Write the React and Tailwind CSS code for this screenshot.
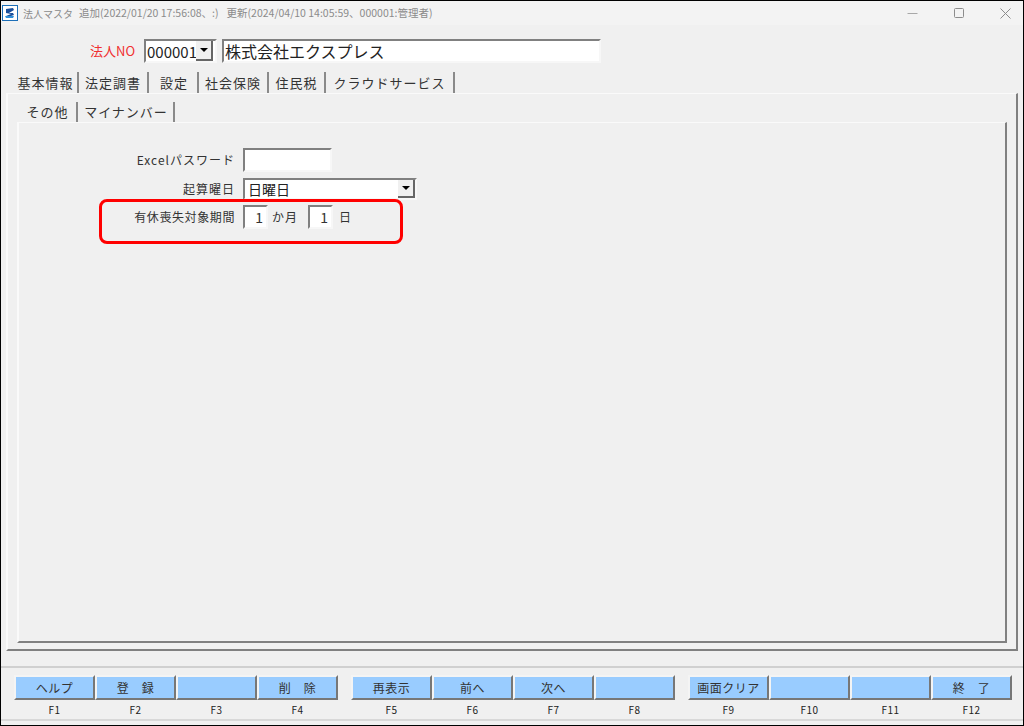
const jp = "font-['Noto_Sans_CJK_JP','Noto_Sans',sans-serif]";

function FnBtn({ label, fn, spaced }) {
  return (
    <div className="w-[81px] flex flex-col items-center">
      <div className="w-full h-[25px] bg-[#99ccff] border-t-2 border-l-2 border-t-[#f4f4f4] border-l-[#f4f4f4] border-r-2 border-b-2 border-r-[#777777] border-b-[#777777] flex items-center justify-center text-[12px] text-[#333333] tracking-[0.5px] whitespace-pre">
        {label}
      </div>
      <div className="mt-[2px] h-[16px] leading-[16px] text-[10px] text-[#222222] tracking-[0.5px]">{fn}</div>
    </div>
  );
}

function Sunken({ className, children }) {
  return (
    <div className={`bg-white border-2 border-t-[#808080] border-l-[#808080] border-r-[#f7f7f7] border-b-[#f7f7f7] ${className}`}>
      {children}
    </div>
  );
}

function Arrow({ className }) {
  return (
    <div className={`bg-[#f0f0f0] border-r-2 border-b-2 border-r-[#666666] border-b-[#666666] flex items-center justify-center ${className}`}>
      <div className="w-0 h-0 border-l-[4px] border-r-[4px] border-t-[4px] border-l-transparent border-r-transparent border-t-black" />
    </div>
  );
}

function Tab({ children, active, className }) {
  return (
    <div className={`flex items-center justify-center h-full border-r-2 border-r-[#8a8a8a] tracking-[1px] whitespace-pre ${active ? "border-t border-t-white" : ""} ${className}`}>
      {children}
    </div>
  );
}

export default function App() {
  return (
    <div className={`relative w-[1024px] h-[726px] bg-[#f0f0f0] border border-black flex flex-col overflow-hidden text-[#333333] ${jp}`}>
      {/* title bar */}
      <div className="h-[24px] bg-[#f3f3f3] flex items-center pl-[1px] shrink-0">
        <svg width="16" height="16" viewBox="0 0 16 16" className="shrink-0">
          <rect x="0.5" y="0.5" width="15" height="15" fill="#ffffff" stroke="#1d6fb8" />
          <path d="M4 4 L11 3 L12 5 L7 8 L11 8 L12 10 L6 12 L4 11 L9 9 L4 8 Z" fill="#1a4f9c" />
          <path d="M3 11 L12 11 L11 13 L4 13 Z" fill="#2f8fd8" />
        </svg>
        <span className="ml-[5px] text-[10px] text-[#8b8b8b] whitespace-pre">法人マスタ</span>
        <span className="ml-[6px] text-[10.5px] text-[#8b8b8b] whitespace-pre">追加(2022/01/20 17:56:08、:)</span>
        <span className="ml-[8px] text-[10.5px] text-[#8b8b8b] whitespace-pre">更新(2024/04/10 14:05:59、000001:管理者)</span>
        <div className="ml-auto flex items-center pr-[12px] gap-[36px]">
          <svg width="11" height="11" viewBox="0 0 11 11"><path d="M0.5 5.5H10.5" stroke="#a8a8a8" /></svg>
          <svg width="10" height="10" viewBox="0 0 10 10"><rect x="0.5" y="0.5" width="9" height="9" rx="1" fill="none" stroke="#8c8c8c" /></svg>
          <svg width="11" height="11" viewBox="0 0 11 11"><path d="M0.5 0.5L10.5 10.5M10.5 0.5L0.5 10.5" stroke="#8c8c8c" /></svg>
        </div>
      </div>

      {/* company row */}
      <div className="h-[24px] mt-[14px] flex items-center shrink-0">
        <span className="ml-[89px] w-[44px] text-[13px] text-[#f03030] whitespace-pre">法人NO</span>
        <Sunken className="ml-[10px] w-[73px] h-[24px] flex items-center">
          <span className="pl-[1px] text-[15px] leading-none text-[#222222] w-[50px]">000001</span>
          <Arrow className="w-[17px] h-[20px]" />
        </Sunken>
        <Sunken className="ml-[5px] w-[379px] h-[24px] flex items-center pl-[1px] text-[16px] text-[#222222] whitespace-pre">
          株式会社エクスプレス
        </Sunken>
      </div>

      {/* outer tab strip */}
      <div className="h-[21px] mt-[9px] pl-[5px] flex items-stretch text-[13px] shrink-0">
        <Tab className="w-[73px] pl-[8px]">基本情報</Tab>
        <Tab className="w-[70px]">法定調書</Tab>
        <Tab className="w-[50px] pl-[2px]">設定</Tab>
        <Tab className="w-[70px]">社会保険</Tab>
        <Tab className="w-[57px]">住民税</Tab>
        <Tab className="w-[129px]">クラウドサービス</Tab>
      </div>

      {/* outer panel */}
      <div className="mx-[5px] h-[558px] border-t border-l-2 border-t-[#fafafa] border-l-[#fafafa] border-r-2 border-b-2 border-r-[#808080] border-b-[#808080] px-[9px] pt-[8px] pb-[6px] flex flex-col shrink-0">
        <div className="h-[20px] flex items-stretch text-[13px] shrink-0">
          <Tab className="w-[61px] pl-[2px]">その他</Tab>
          <Tab className="w-[97px] pl-[1px]">マイナンバー</Tab>
        </div>
        {/* inner panel */}
        <div className="relative flex-1 border-t border-l-2 border-t-[#fafafa] border-l-[#fafafa] border-r-2 border-b-2 border-r-[#808080] border-b-[#808080] pt-[25px] flex flex-col text-[12px]">
          <div className="flex items-center h-[24px]">
            <span className="w-[216px] text-right tracking-[1px] whitespace-pre">Excelパスワード</span>
            <Sunken className="ml-[8px] w-[89px] h-[24px]" />
          </div>
          <div className="flex items-center h-[24px] mt-[5px]">
            <span className="w-[216px] text-right tracking-[1px] whitespace-pre">起算曜日</span>
            <Sunken className="ml-[8px] w-[174px] h-[22px] flex items-center justify-between pl-[3px] text-[14px] text-[#222222]">
              <span>日曜日</span>
              <Arrow className="w-[17px] h-[18px]" />
            </Sunken>
          </div>
          <div className="flex items-center h-[24px] mt-[4px]">
            <span className="w-[216px] text-right tracking-[0.6px] whitespace-pre">有休喪失対象期間</span>
            <Sunken className="ml-[8px] w-[25px] h-[24px] flex items-center justify-end pr-[3px] text-[14px]">1</Sunken>
            <span className="ml-[4px] w-[36px] tracking-[1px]">か月</span>
            <Sunken className="w-[25px] h-[24px] flex items-center justify-end pr-[3px] text-[14px]">1</Sunken>
            <span className="ml-[6px]">日</span>
          </div>
          {/* annotation */}
          <div className="absolute left-[80px] top-[76px] w-[304px] h-[45px] border-[3px] border-[#ff0000] rounded-[8px]" />
        </div>
      </div>

      {/* footer */}
      <div className="mt-[15px] h-[52px] border-t-2 border-[#d0d0d0] pt-[7px] pl-[13px] flex shrink-0">
        <div className="flex"><FnBtn label="ヘルプ" fn="F1" /><FnBtn label="登　録" fn="F2" /><FnBtn label="" fn="F3" /><FnBtn label="削　除" fn="F4" /></div>
        <div className="flex ml-[13px]"><FnBtn label="再表示" fn="F5" /><FnBtn label="前へ" fn="F6" /><FnBtn label="次へ" fn="F7" /><FnBtn label="" fn="F8" /></div>
        <div className="flex ml-[13px]"><FnBtn label="画面クリア" fn="F9" /><FnBtn label="" fn="F10" /><FnBtn label="" fn="F11" /><FnBtn label="終　了" fn="F12" /></div>
      </div>
      <div className="mt-[1px] border-t-2 border-[#d8d8d8]" />
    </div>
  );
}
